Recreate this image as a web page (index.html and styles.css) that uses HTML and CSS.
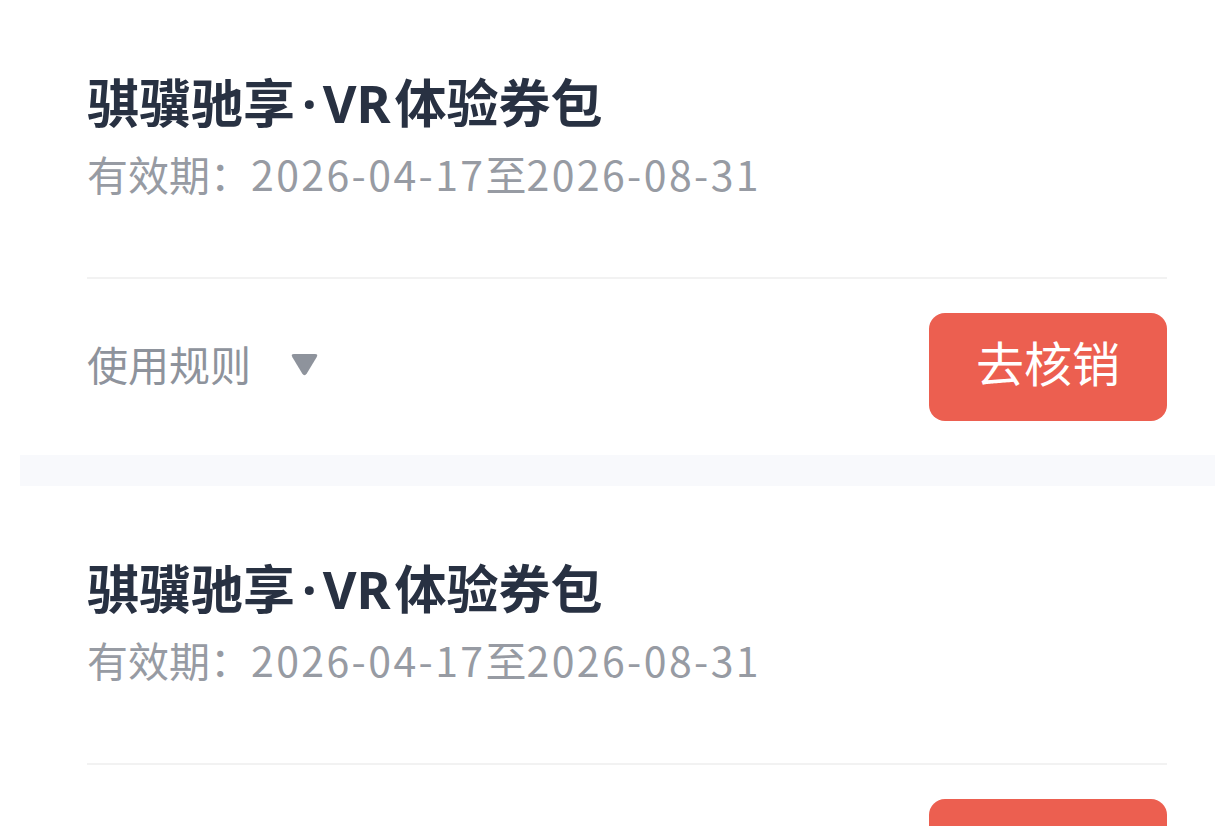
FILE: index.html
```html
<!DOCTYPE html>
<html lang="zh-CN">
<head>
<meta charset="utf-8">
<title>券包</title>
<link rel="stylesheet" href="styles.css">
</head>
<body>
<div class="list">
  <div class="card">
    <div class="info">
      <div class="title">骐骥驰享<span class="dot">·</span><span class="latin">VR</span>体验券包</div>
      <div class="date">有效期：<span class="num">2026-04-17</span>至<span class="num">2026-08-31</span></div>
    </div>
    <div class="divider"></div>
    <div class="footer">
      <div class="rules">
        <span class="rules-text">使用规则</span>
        <svg class="tri" width="29" height="24" viewBox="0 0 29 24"><path d="M4 1 H25 Q28.5 1 26.6 4.2 L16.8 20.6 Q14.5 24 12.2 20.6 L2.4 4.2 Q0.5 1 4 1 Z" fill="#8e939c"/></svg>
      </div>
      <button class="btn">去核销</button>
    </div>
  </div>
  <div class="card">
    <div class="info">
      <div class="title">骐骥驰享<span class="dot">·</span><span class="latin">VR</span>体验券包</div>
      <div class="date">有效期：<span class="num">2026-04-17</span>至<span class="num">2026-08-31</span></div>
    </div>
    <div class="divider"></div>
    <div class="footer">
      <div class="rules">
        <span class="rules-text">使用规则</span>
        <svg class="tri" width="29" height="24" viewBox="0 0 29 24"><path d="M4 1 H25 Q28.5 1 26.6 4.2 L16.8 20.6 Q14.5 24 12.2 20.6 L2.4 4.2 Q0.5 1 4 1 Z" fill="#8e939c"/></svg>
      </div>
      <button class="btn">去核销</button>
    </div>
  </div>
</div>
</body>
</html>
```

FILE: styles.css
```css
html, body {
  margin: 0;
  padding: 0;
  background: #ffffff;
  overflow: hidden;
  font-family: "Noto Sans CJK SC", "Noto Sans", sans-serif;
}
.list {
  margin-left: 20px;
  width: 1214px;
  background: #f8f9fc;
  display: flex;
  flex-direction: column;
  gap: 31px;
}
.card {
  background: #ffffff;
  padding: 0 67px 34px;
  height: 455px;
  box-sizing: border-box;
  display: flex;
  flex-direction: column;
}
.info {
  padding-top: 66px;
  height: 277px;
  box-sizing: border-box;
}
.title {
  font-size: 52px;
  line-height: 70px;
  font-weight: 700;
  color: #283142;
  white-space: nowrap;
}
.dot {
  font-family: "Noto Sans", sans-serif;
  font-weight: 700;
  margin: 0 6px 0 7px;
}
.latin {
  font-family: "Noto Sans", sans-serif;
  font-weight: 700;
  margin-right: 4px;
}
.date {
  margin-top: 7px;
  font-size: 41px;
  line-height: 56px;
  color: #979ba3;
  white-space: nowrap;
}
.num {
  letter-spacing: 2.4px;
}
.divider {
  height: 2px;
  background: #f2f2f2;
}
.footer {
  margin-top: 34px;
  display: flex;
  align-items: center;
  justify-content: space-between;
}
.rules {
  display: flex;
  align-items: center;
  gap: 39px;
  padding-bottom: 4px;
}
.rules-text {
  font-size: 41px;
  color: #8e939c;
  line-height: 56px;
  padding-bottom: 4px;
}
.tri {
  display: block;
}
.btn {
  width: 238px;
  height: 108px;
  border: none;
  border-radius: 16px;
  background: #ec5f50;
  color: #ffffff;
  font-family: "Noto Sans CJK SC", sans-serif;
  font-size: 48px;
  line-height: 60px;
  padding: 0 0 12px;
}
```
